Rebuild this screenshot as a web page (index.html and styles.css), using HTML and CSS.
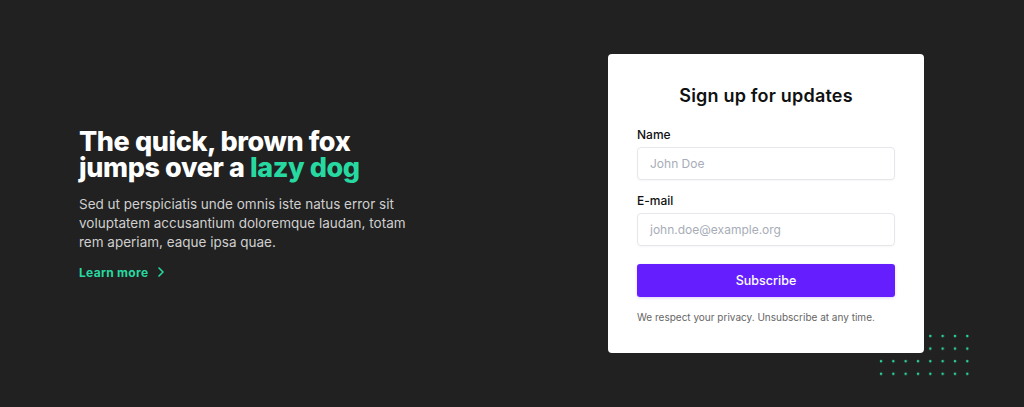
FILE: index.html
```html
<!DOCTYPE html>
<html lang="en">
<head>
<meta charset="utf-8">
<title>Sign up</title>
<link rel="stylesheet" href="styles.css">
</head>
<body>
<section class="hero">
  <div class="intro">
    <h1 class="headline">The quick, brown fox<br>jumps over a <span class="accent">lazy dog</span></h1>
    <p class="lead">Sed ut perspiciatis unde omnis iste natus error sit voluptatem accusantium doloremque laudan, totam rem aperiam, eaque ipsa quae.</p>
    <a class="more" href="#">Learn more
      <svg class="chev" width="8" height="10" viewBox="0 0 8 10" aria-hidden="true"><path d="M2 1l4 4-4 4" fill="none" stroke="currentColor" stroke-width="1.6" stroke-linecap="round" stroke-linejoin="round"/></svg>
    </a>
  </div>
  <div class="card-wrap">
    <svg class="dots" width="92" height="42" viewBox="0 0 92 42" aria-hidden="true">
      <defs>
        <pattern id="dp" x="0" y="0" width="12.33" height="12.6" patternUnits="userSpaceOnUse">
          <circle cx="2" cy="2" r="1.3" fill="#2ad6a0"/>
        </pattern>
      </defs>
      <rect width="92" height="42" fill="url(#dp)"/>
    </svg>
    <form class="card">
      <h2 class="card-title">Sign up for updates</h2>
      <label class="field">
        <span class="label">Name</span>
        <span class="input">John Doe</span>
      </label>
      <label class="field">
        <span class="label">E-mail</span>
        <span class="input">john.doe@example.org</span>
      </label>
      <button class="btn" type="button">Subscribe</button>
      <p class="note">We respect your privacy. Unsubscribe at any time.</p>
    </form>
  </div>
</section>
</body>
</html>
```

FILE: styles.css
```css
* { box-sizing: border-box; }
html, body { margin: 0; padding: 0; }
body {
  background: #212121;
  font-family: "Inter", "Open Sans", sans-serif;
  color: #fff;
  width: 1024px;
  height: 407px;
  overflow: hidden;
}
.hero {
  height: 407px;
  display: flex;
  align-items: center;
  justify-content: space-between;
  padding: 0 100px 0 79px;
}
.intro {
  width: 360px;
  margin-top: 2px;
}
.headline {
  margin: 0;
  font-size: 27px;
  line-height: 26px;
  font-weight: 800;
  letter-spacing: -0.4px;
  color: #fff;
}
.accent { color: #27d9a1; }
.lead {
  margin: 14px 0 0;
  width: 350px;
  font-size: 13.5px;
  line-height: 19px;
  color: #cfcfcf;
}
.more {
  display: inline-flex;
  align-items: center;
  gap: 9px;
  margin-top: 13px;
  color: #27d9a1;
  font-size: 12px;
  font-weight: 700;
  letter-spacing: 0.3px;
  text-decoration: none;
}
.chev { display: block; }
.card-wrap { position: relative; }
.dots {
  position: absolute;
  left: 271px;
  top: 280px;
}
.card {
  position: relative;
  z-index: 1;
  width: 316px;
  background: #fff;
  border-radius: 4px;
  padding: 31px 29px 30px;
  margin: 0;
}
.card-title {
  margin: 0 0 21px;
  text-align: center;
  font-size: 18px;
  font-weight: 600;
  letter-spacing: 0.2px;
  color: #111;
}
.field { display: block; margin-bottom: 13px; }
.label {
  display: block;
  font-size: 12px;
  font-weight: 500;
  color: #111;
  margin-bottom: 5px;
}
.input {
  display: flex;
  align-items: center;
  height: 33px;
  padding: 0 12px;
  border: 1px solid #e5e7eb;
  border-radius: 4px;
  box-shadow: 0 1px 2px rgba(0,0,0,0.04);
  font-size: 12px;
  color: #a7adb7;
}
.btn {
  display: block;
  width: 100%;
  height: 33px;
  margin-top: 18px;
  border: 0;
  border-radius: 3px;
  background: #651fff;
  color: #fff;
  font-family: inherit;
  font-size: 12.5px;
  font-weight: 500;
  box-shadow: 0 1px 3px rgba(101,31,255,0.2);
}
.note {
  margin: 14px 0 0;
  font-size: 10px;
  color: #666;
}
```
